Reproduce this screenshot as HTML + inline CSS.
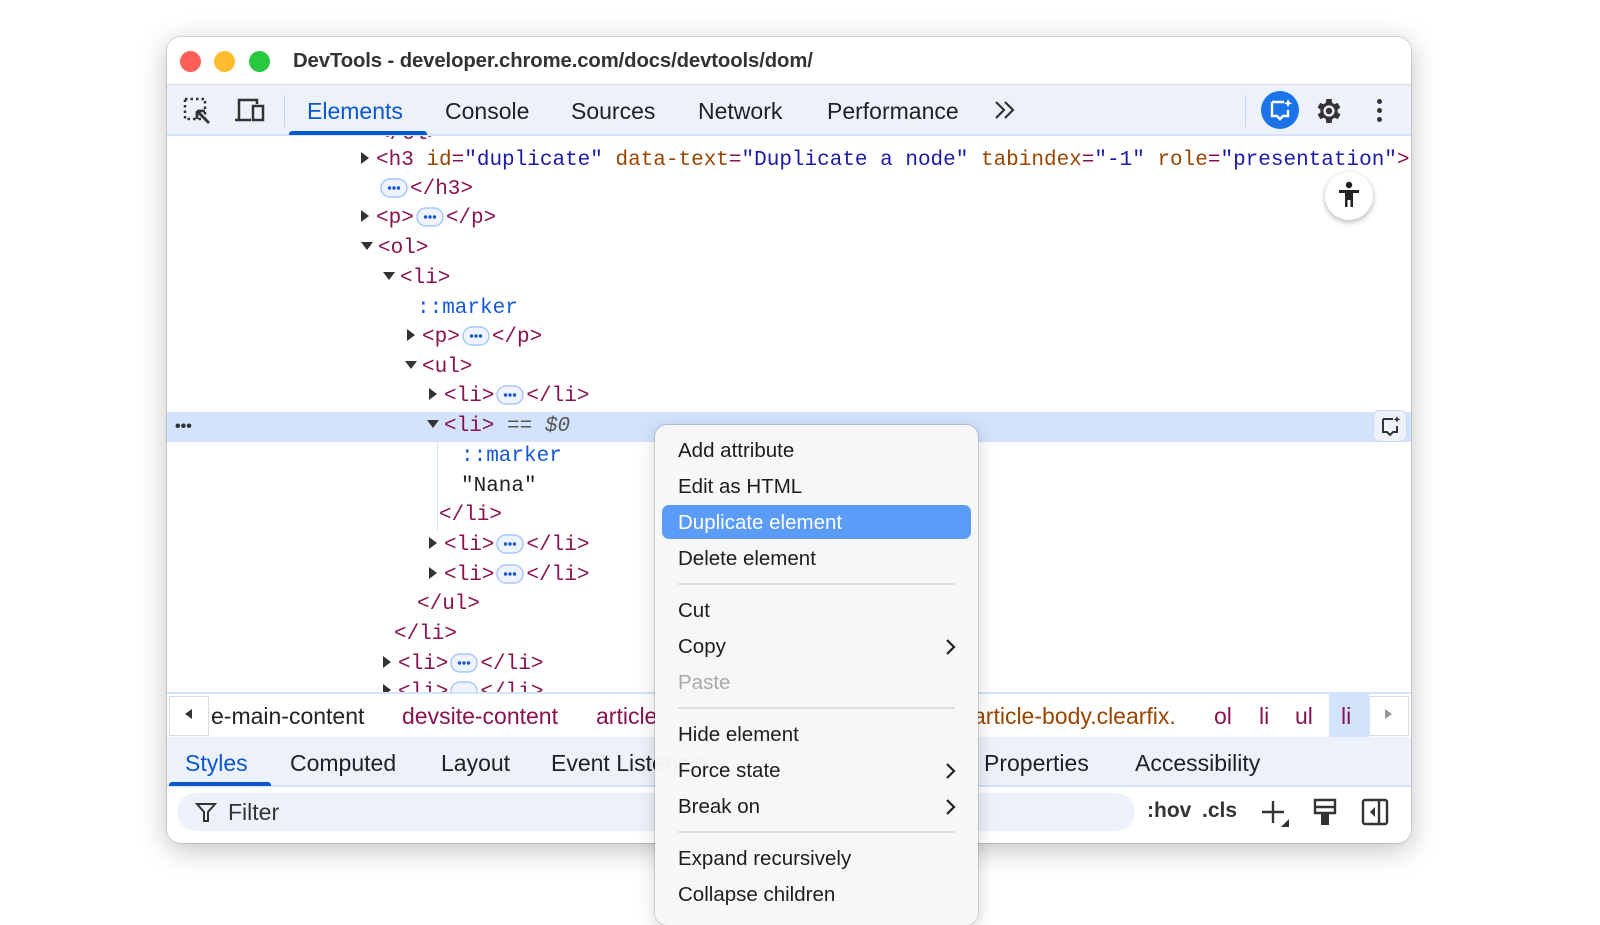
<!DOCTYPE html>
<html><head><meta charset="utf-8"><style>
*{margin:0;padding:0;box-sizing:border-box}
body{width:1600px;height:908px;background:#fff;position:relative;overflow:hidden;font-family:"Liberation Sans",sans-serif}
.win{position:absolute;left:167px;top:37px;width:1244px;height:806px;border-radius:14px;background:#fff;box-shadow:0 6px 28px rgba(0,0,0,.25),0 0 0 1px rgba(0,0,0,.12);overflow:hidden}
.title{position:absolute;left:0;top:0;width:100%;height:48px;background:#fff;border-bottom:1px solid #dcdcdc}
.dot{position:absolute;top:14px;width:21px;height:21px;border-radius:50%}
.title .t{position:absolute;left:126px;top:13px;font-size:20.3px;color:#333;font-weight:bold;letter-spacing:-.1px}
.tb{position:absolute;left:0;top:48px;width:100%;height:51px;background:#edf2fa;border-bottom:2px solid #d3e3fd}
.tab{position:absolute;top:13px;font-size:23px;color:#202124}
.tree{position:absolute;left:0;top:99px;width:100%;height:556px;font-family:"Liberation Mono",monospace;font-size:21px;overflow:hidden}
.row{position:absolute;height:30px;line-height:30px;white-space:pre}
.tg{color:#881350}.at{color:#994500}.av{color:#1a1aa6}.ps{color:#1558d6}
.tri{display:inline-block;width:0;height:0;border-left:8px solid #333;border-top:6px solid transparent;border-bottom:6px solid transparent;margin-right:7px;vertical-align:1px}
.trd{display:inline-block;width:0;height:0;border-top:8px solid #333;border-left:6px solid transparent;border-right:6px solid transparent;margin-right:5px;vertical-align:3px}
.el{display:inline-block;vertical-align:-4px;margin:0 2px}
.sel{position:absolute;left:0;top:276px;width:100%;height:30px;background:#d3e3fd}
.bc{position:absolute;left:0;top:655px;width:100%;height:45px;background:#fff;border-top:2px solid #d3e3fd;font-size:23px}
.bc span{position:absolute;top:9px}
.st{position:absolute;left:0;top:700px;width:100%;height:50px;background:#edf2fa;border-bottom:2px solid #d3e3fd}
.st span{position:absolute;top:13px;font-size:23px;color:#202124}
.fr{position:absolute;left:0;top:750px;width:100%;height:56px;background:#fff}
.menu{position:absolute;left:655px;top:425px;width:323px;height:500px;border-radius:12px;background:rgba(247,247,247,.97);box-shadow:0 4px 18px rgba(0,0,0,.18),0 0 0 1px rgba(0,0,0,.12)}
.mi{position:absolute;left:23px;font-size:20.5px;color:#1d1d1d}
.sep{position:absolute;left:23px;width:277px;height:2px;background:#dedede}
.chev{position:absolute;right:22px}
</style></head><body>
<div class="win">
 <div class="title">
  <div class="dot" style="left:13px;background:#fe5f57"></div>
  <div class="dot" style="left:47px;background:#febc2e"></div>
  <div class="dot" style="left:82px;background:#28c840"></div>
  <div class="t">DevTools - developer.chrome.com/docs/devtools/dom/</div>
 </div>
 <div class="tb">
  <svg style="position:absolute;left:16px;top:12px" width="30" height="28" viewBox="0 0 30 28"><rect x="2" y="2" width="20" height="20" fill="none" stroke="#333" stroke-width="2.5" stroke-dasharray="2.5 3"/><path d="M14 14 L26 26 M14 14 h8 M14 14 v8" stroke="#333" stroke-width="2.8" fill="none"/></svg>
  <svg style="position:absolute;left:66px;top:12px" width="34" height="28" viewBox="0 0 34 28"><path d="M6 22 V3 H24 V7 M2 23 H18" stroke="#333" stroke-width="2.5" fill="none"/><rect x="20" y="9" width="10" height="14" fill="none" stroke="#333" stroke-width="2.5"/></svg>
  <div style="position:absolute;left:117px;top:10px;width:1px;height:32px;background:#c8d7ef"></div>
  <div class="tab" style="left:140px;color:#0b57d0">Elements</div>
  <div style="position:absolute;left:122px;top:46px;width:138px;height:4px;background:#0b57d0;border-radius:3px 3px 0 0"></div>
  <div class="tab" style="left:278px">Console</div>
  <div class="tab" style="left:404px">Sources</div>
  <div class="tab" style="left:531px">Network</div>
  <div class="tab" style="left:660px">Performance</div>
  <svg style="position:absolute;left:826px;top:15px" width="24" height="20" viewBox="0 0 24 20"><path d="M3 2 L11 10 L3 18 M12 2 L20 10 L12 18" stroke="#333" stroke-width="2.2" fill="none"/></svg>
  <div style="position:absolute;left:1078px;top:10px;width:1px;height:32px;background:#c8d7ef"></div>
  <div style="position:absolute;left:1094px;top:6px;width:38px;height:38px;border-radius:50%;background:#1a73e8"><svg width="38" height="38" viewBox="0 0 38 38"><path d="M11 11 H23 M11 11 V25 H16 L19 28 L22 25 H27 V19" stroke="#fff" stroke-width="2.4" fill="none"/><path d="M27 8 l1.2 3 3 1.2 -3 1.2 -1.2 3 -1.2 -3 -3 -1.2 3 -1.2z" fill="#fff"/></svg></div>
  <svg style="position:absolute;left:1146px;top:10px" width="32" height="32" viewBox="0 0 24 24"><path fill="#333" d="M19.4 13a7.5 7.5 0 0 0 0-2l2.1-1.6-2-3.5-2.5 1a7 7 0 0 0-1.7-1L15 3h-4l-.4 2.9a7 7 0 0 0-1.7 1l-2.5-1-2 3.5L6.6 11a7.5 7.5 0 0 0 0 2l-2.1 1.6 2 3.5 2.5-1a7 7 0 0 0 1.7 1L11 21h4l.4-2.9a7 7 0 0 0 1.7-1l2.5 1 2-3.5zM13 16.2a4.2 4.2 0 1 1 0-8.4 4.2 4.2 0 0 1 0 8.4z" transform="translate(-1 0)"/><circle cx="12" cy="12" r="2.4" fill="#333"/></svg>
  <div style="position:absolute;left:1210px;top:14px;width:5px;height:5px;border-radius:50%;background:#333;box-shadow:0 9px 0 #333,0 18px 0 #333"></div>
 </div>
 <div class="tree">
  <div class="sel"></div>
  <div class="row" style="left:210px;top:-16px;color:#881350">&lt;/ol&gt;</div>
  <div class="row" style="left:194px;top:10px"><span class="tri"></span><span class="tg">&lt;h3 </span><span class="at">id</span><span class="tg">=</span><span class="av">"duplicate"</span> <span class="at">data-text</span><span class="tg">=</span><span class="av">"Duplicate a node"</span> <span class="at">tabindex</span><span class="tg">=</span><span class="av">"-1"</span> <span class="at">role</span><span class="tg">=</span><span class="av">"presentation"</span><span class="tg">&gt;</span></div>
  <div class="row" style="left:211px;top:39px"><svg class="el" width="28" height="20" viewBox="0 0 28 20"><rect x="1" y="1" width="26" height="18" rx="9" fill="#eef3fd" stroke="#a8c7fa" stroke-width="1.5"/><circle cx="9.5" cy="10" r="1.7" fill="#1558d6"/><circle cx="14" cy="10" r="1.7" fill="#1558d6"/><circle cx="18.5" cy="10" r="1.7" fill="#1558d6"/></svg><span class="tg">&lt;/h3&gt;</span></div>
  <div class="row" style="left:194px;top:68px"><span class="tri"></span><span class="tg">&lt;p&gt;</span><svg class="el" width="28" height="20" viewBox="0 0 28 20"><rect x="1" y="1" width="26" height="18" rx="9" fill="#eef3fd" stroke="#a8c7fa" stroke-width="1.5"/><circle cx="9.5" cy="10" r="1.7" fill="#1558d6"/><circle cx="14" cy="10" r="1.7" fill="#1558d6"/><circle cx="18.5" cy="10" r="1.7" fill="#1558d6"/></svg><span class="tg">&lt;/p&gt;</span></div>
  <div class="row" style="left:194px;top:98px"><span class="trd"></span><span class="tg">&lt;ol&gt;</span></div>
  <div class="row" style="left:216px;top:128px"><span class="trd"></span><span class="tg">&lt;li&gt;</span></div>
  <div class="row" style="left:250px;top:158px"><span class="ps">::marker</span></div>
  <div class="row" style="left:240px;top:187px"><span class="tri"></span><span class="tg">&lt;p&gt;</span><svg class="el" width="28" height="20" viewBox="0 0 28 20"><rect x="1" y="1" width="26" height="18" rx="9" fill="#eef3fd" stroke="#a8c7fa" stroke-width="1.5"/><circle cx="9.5" cy="10" r="1.7" fill="#1558d6"/><circle cx="14" cy="10" r="1.7" fill="#1558d6"/><circle cx="18.5" cy="10" r="1.7" fill="#1558d6"/></svg><span class="tg">&lt;/p&gt;</span></div>
  <div class="row" style="left:238px;top:217px"><span class="trd"></span><span class="tg">&lt;ul&gt;</span></div>
  <div class="row" style="left:262px;top:246px"><span class="tri"></span><span class="tg">&lt;li&gt;</span><svg class="el" width="28" height="20" viewBox="0 0 28 20"><rect x="1" y="1" width="26" height="18" rx="9" fill="#eef3fd" stroke="#a8c7fa" stroke-width="1.5"/><circle cx="9.5" cy="10" r="1.7" fill="#1558d6"/><circle cx="14" cy="10" r="1.7" fill="#1558d6"/><circle cx="18.5" cy="10" r="1.7" fill="#1558d6"/></svg><span class="tg">&lt;/li&gt;</span></div>
  <div class="row" style="left:8px;top:276px;font-family:'Liberation Sans';font-weight:bold;color:#333;font-size:16px">•••</div>
  <div class="row" style="left:260px;top:276px"><span class="trd"></span><span class="tg">&lt;li&gt;</span> <span style="color:#555">== <i>$0</i></span></div>
  <div style="position:absolute;left:270px;top:306px;width:1px;height:88px;background:#d3e3fd"></div>
  <div class="row" style="left:294px;top:306px"><span class="ps">::marker</span></div>
  <div class="row" style="left:294px;top:336px;color:#202124">"Nana"</div>
  <div class="row" style="left:272px;top:365px"><span class="tg">&lt;/li&gt;</span></div>
  <div class="row" style="left:262px;top:395px"><span class="tri"></span><span class="tg">&lt;li&gt;</span><svg class="el" width="28" height="20" viewBox="0 0 28 20"><rect x="1" y="1" width="26" height="18" rx="9" fill="#eef3fd" stroke="#a8c7fa" stroke-width="1.5"/><circle cx="9.5" cy="10" r="1.7" fill="#1558d6"/><circle cx="14" cy="10" r="1.7" fill="#1558d6"/><circle cx="18.5" cy="10" r="1.7" fill="#1558d6"/></svg><span class="tg">&lt;/li&gt;</span></div>
  <div class="row" style="left:262px;top:425px"><span class="tri"></span><span class="tg">&lt;li&gt;</span><svg class="el" width="28" height="20" viewBox="0 0 28 20"><rect x="1" y="1" width="26" height="18" rx="9" fill="#eef3fd" stroke="#a8c7fa" stroke-width="1.5"/><circle cx="9.5" cy="10" r="1.7" fill="#1558d6"/><circle cx="14" cy="10" r="1.7" fill="#1558d6"/><circle cx="18.5" cy="10" r="1.7" fill="#1558d6"/></svg><span class="tg">&lt;/li&gt;</span></div>
  <div class="row" style="left:250px;top:454px"><span class="tg">&lt;/ul&gt;</span></div>
  <div class="row" style="left:227px;top:484px"><span class="tg">&lt;/li&gt;</span></div>
  <div class="row" style="left:216px;top:514px"><span class="tri"></span><span class="tg">&lt;li&gt;</span><svg class="el" width="28" height="20" viewBox="0 0 28 20"><rect x="1" y="1" width="26" height="18" rx="9" fill="#eef3fd" stroke="#a8c7fa" stroke-width="1.5"/><circle cx="9.5" cy="10" r="1.7" fill="#1558d6"/><circle cx="14" cy="10" r="1.7" fill="#1558d6"/><circle cx="18.5" cy="10" r="1.7" fill="#1558d6"/></svg><span class="tg">&lt;/li&gt;</span></div>
  <div class="row" style="left:216px;top:542px"><span class="tri"></span><span class="tg">&lt;li&gt;</span><svg class="el" width="28" height="20" viewBox="0 0 28 20"><rect x="1" y="1" width="26" height="18" rx="9" fill="#eef3fd" stroke="#a8c7fa" stroke-width="1.5"/></svg><span class="tg">&lt;/li&gt;</span></div>
  <div style="position:absolute;left:1158px;top:36px;width:48px;height:48px;border-radius:50%;background:#fff;box-shadow:0 2px 6px rgba(0,0,0,.3)"><svg width="48" height="48" viewBox="0 0 48 48"><circle cx="24" cy="13" r="3.2" fill="#222"/><path d="M14 18 H34 V21 H28 V35 H25.5 V28 H22.5 V35 H20 V21 H14z" fill="#222"/></svg></div>
  <div style="position:absolute;left:1206px;top:274px;width:34px;height:32px;border-radius:7px;background:#edf2fa;border:1px solid #c8d7ef"><svg width="32" height="30" viewBox="0 0 32 30"><path d="M9 8 H19 M9 8 V21 H13 L16 24 L19 21 H23 V15" stroke="#333" stroke-width="2" fill="none"/><path d="M23 5 l1 2.4 2.4 1 -2.4 1 -1 2.4 -1 -2.4 -2.4 -1 2.4 -1z" fill="#333"/></svg></div>
 </div>
 <div class="bc">
  <div style="position:absolute;left:2px;top:2px;width:40px;height:40px;border:1px solid #ddd;background:#fff"></div>
  <div style="position:absolute;left:18px;top:15px;border-right:7px solid #333;border-top:5px solid transparent;border-bottom:5px solid transparent"></div>
  <span style="left:44px;color:#202124">e-main-content</span>
  <span style="left:235px;color:#881350">devsite-content</span>
  <span style="left:429px;color:#881350">article</span>
  <span style="left:806px;color:#994500">article-body.clearfix.</span>
  <span style="left:1047px;color:#881350">ol</span>
  <span style="left:1092px;color:#881350">li</span>
  <div style="position:absolute;left:1162px;top:0;width:40px;height:43px;background:#d3e3fd"></div>
  <span style="left:1174px;color:#881350">li</span>
  <div style="position:absolute;left:1202px;top:2px;width:40px;height:40px;border:1px solid #ddd;background:#fff"></div>
  <span style="left:1128px;color:#881350">ul</span>
  <div style="position:absolute;left:1218px;top:15px;border-left:7px solid #999;border-top:5px solid transparent;border-bottom:5px solid transparent"></div>
 </div>
 <div class="st">
  <span style="left:18px;color:#0b57d0">Styles</span>
  <div style="position:absolute;left:2px;top:45px;width:102px;height:4px;background:#0b57d0;border-radius:3px 3px 0 0"></div>
  <span style="left:123px">Computed</span>
  <span style="left:274px">Layout</span>
  <span style="left:384px">Event Listeners</span>
  <span style="left:817px">Properties</span>
  <span style="left:968px">Accessibility</span>
 </div>
 <div class="fr">
  <div style="position:absolute;left:10px;top:6px;width:958px;height:38px;border-radius:19px;background:#edf2fa"></div>
  <svg style="position:absolute;left:28px;top:14px" width="22" height="22" viewBox="0 0 22 22"><path d="M2 3 H20 L13 11 V20 H9 V11z" fill="none" stroke="#333" stroke-width="2"/></svg>
  <div style="position:absolute;left:61px;top:12px;font-size:23px;color:#333">Filter</div>
  <div style="position:absolute;left:980px;top:12px;font-size:21px;font-weight:bold;color:#333">:hov</div>
  <div style="position:absolute;left:1035px;top:12px;font-size:21px;font-weight:bold;color:#333">.cls</div>
  <svg style="position:absolute;left:1092px;top:10px" width="32" height="32" viewBox="0 0 32 32"><path d="M14 4 V26 M3 15 H25" stroke="#333" stroke-width="2.4"/><path d="M30 22 V30 H22z" fill="#333"/></svg>
  <svg style="position:absolute;left:1145px;top:10px" width="26" height="30" viewBox="0 0 26 30"><path d="M3 3 H23 V16 H3z M3 10 H23" fill="none" stroke="#333" stroke-width="2.4"/><path d="M9 16 H17 V28 H9z" fill="#333"/></svg>
  <svg style="position:absolute;left:1193px;top:10px" width="30" height="30" viewBox="0 0 30 30"><rect x="3" y="3" width="24" height="24" rx="2" fill="none" stroke="#333" stroke-width="2.4"/><path d="M19 3 V27" stroke="#333" stroke-width="2.4"/><path d="M15 10 V20 L10 15z" fill="#333"/></svg>
 </div>
</div>
<div class="menu">
 <div style="position:absolute;left:7px;top:80px;width:309px;height:34px;border-radius:7px;background:#5a9cf8"></div>
 <div class="mi" style="top:14px">Add attribute</div>
 <div class="mi" style="top:50px">Edit as HTML</div>
 <div class="mi" style="top:86px;color:#fff">Duplicate element</div>
 <div class="mi" style="top:122px">Delete element</div>
 <div class="sep" style="top:158px"></div>
 <div class="mi" style="top:174px">Cut</div>
 <svg class="chev" style="top:213px" width="12" height="18" viewBox="0 0 12 18"><path d="M3 2 L10 9 L3 16" stroke="#222" stroke-width="2.2" fill="none"/></svg>
 <div class="mi" style="top:210px">Copy</div>
 <div class="mi" style="top:246px;color:#aaa">Paste</div>
 <div class="sep" style="top:282px"></div>
 <div class="mi" style="top:298px">Hide element</div>
 <div class="mi" style="top:334px">Force state</div>
 <svg class="chev" style="top:337px" width="12" height="18" viewBox="0 0 12 18"><path d="M3 2 L10 9 L3 16" stroke="#222" stroke-width="2.2" fill="none"/></svg>
 <div class="mi" style="top:370px">Break on</div>
 <svg class="chev" style="top:373px" width="12" height="18" viewBox="0 0 12 18"><path d="M3 2 L10 9 L3 16" stroke="#222" stroke-width="2.2" fill="none"/></svg>
 <div class="sep" style="top:406px"></div>
 <div class="mi" style="top:422px">Expand recursively</div>
 <div class="mi" style="top:458px">Collapse children</div>
</div>
</body></html>
